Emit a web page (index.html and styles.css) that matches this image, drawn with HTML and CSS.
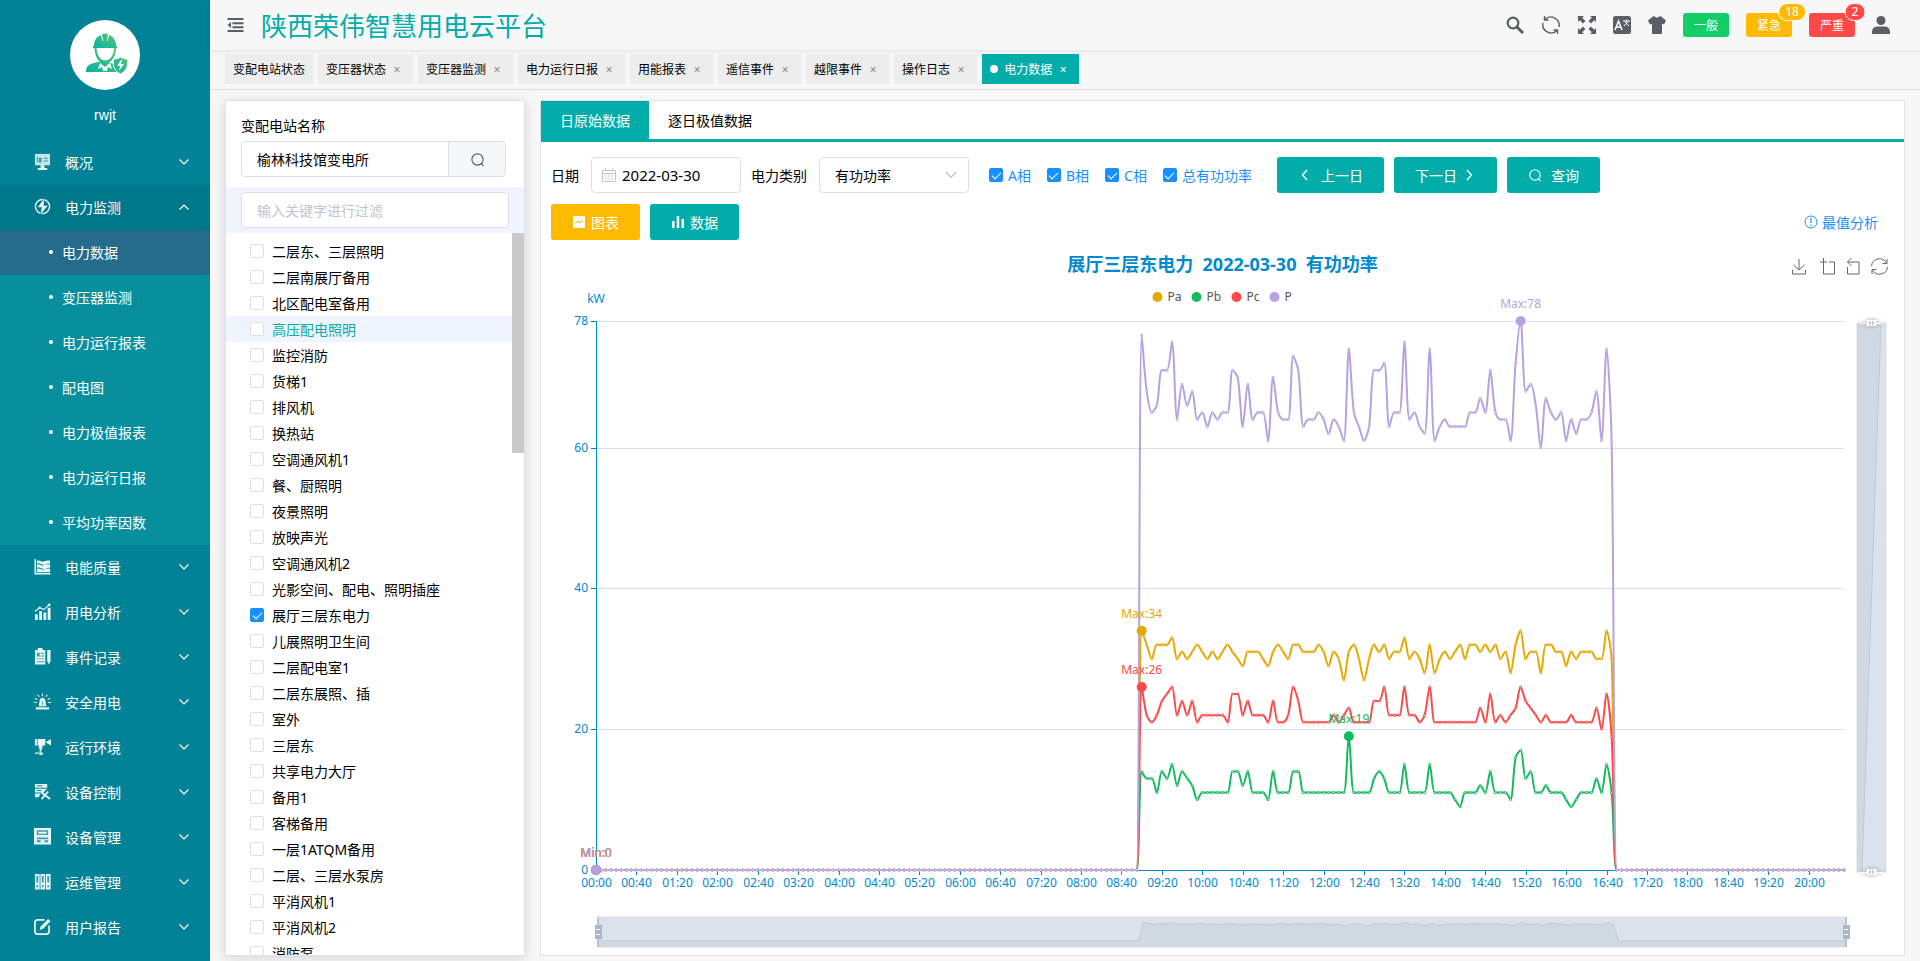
FILE: index.html
```html
<!DOCTYPE html>
<html lang="zh-CN">
<head>
    <meta charset="UTF-8">
    <meta name="viewport" content="width=device-width, initial-scale=1.0">
    <title>陕西荣伟智慧用电云平台</title>
    <link rel="stylesheet" href="styles.css">
</head>
<body>
    <svg class="sprite" aria-hidden="true">
        <symbol id="down" viewBox="0 0 12 12"><path d="M1.5 3.500 6 8l4.500-4.500" fill="none" stroke="currentColor" stroke-width="1.200"/></symbol>
        <symbol id="lens" viewBox="0 0 16 16"><circle cx="8" cy="8" r="6" fill="none" stroke="currentColor" stroke-width="1.200"/><path d="m11.500 12 3 3" stroke="currentColor" stroke-width="1.200"/></symbol>
    </svg>

    <aside class="sidebar">
        <div class="user">
            <div class="avatar">
                <svg viewBox="0 0 70 70">
                    <defs><linearGradient id="ag" x1="0" y1="1" x2="1" y2="0"><stop offset="0" stop-color="#08b3a8"/><stop offset="1" stop-color="#58c46c"/></linearGradient></defs>
                    <g fill="url(#ag)">
                        <path d="M24 26c0-6 3-9.500 7-11l1.500 6h.8L32 14.500c1.500-1.500 4.500-1.500 6 0L36.800 21h.8l1.500-6c4 1.500 7 5 7 11h1v2H23v-2z"/>
                        <path d="M24.500 28H46c0 8-4 13-7 14.500l9 3c-2 1-2 4 0 6.500H16c0-6 3-8 8-9l6-1.500c-3-2-5-6-5.500-13.500z"/>
                        <path d="M50.500 37c2 1.500 4 2 7 2 1 7-1 12-7 15-6-3-8-8-7-15 3 0 5-.5 7-2z" stroke="#fff"/>
                    </g>
                    <path d="M26.500 28h17.500c0 7-4 12.500-8.800 12.500S27 35 26.500 28zM30 43l5 4 5-4 2 6-4-2-1 4h-4l-1-4-4 2zM51 40l-4 6h3l-1 5 5-7h-3l1-4z" fill="#fff"/>
                </svg>
            </div>
            <div class="user-name">rwjt</div>
        </div>
        <nav class="menu">
            <button class="menu-item">
                <svg class="menu-icon" viewBox="0 0 18 18"><path d="M1 1h16v12H1z" opacity=".85"/><path d="M7 13h4v3h3v2H4v-2h3z"/><path d="M3 4h1v6H3zM5 5h3v5H5zM10 5h5v1h-5zM10 8h5v1h-5z" class="cut"/></svg>
                <span>概况</span><svg class="arrow"><use href="#down"/></svg>
            </button>
            <button class="menu-item open">
                <svg class="menu-icon" viewBox="0 0 18 18"><circle cx="9" cy="9" r="7.500" fill="none" stroke="#e8f7f8" stroke-width="1.500"/><path d="M11 0 3.500 10H8l-1.500 8L15 8h-4.500z" stroke="#00788c" stroke-width=".6"/></svg>
                <span>电力监测</span><svg class="arrow"><use href="#down"/></svg>
            </button>
            <ul class="submenu">
                <li><a href="#" class="current">电力数据</a></li>
                <li><a href="#">变压器监测</a></li>
                <li><a href="#">电力运行报表</a></li>
                <li><a href="#">配电图</a></li>
                <li><a href="#">电力极值报表</a></li>
                <li><a href="#">电力运行日报</a></li>
                <li><a href="#">平均功率因数</a></li>
            </ul>
            <button class="menu-item">
                <svg class="menu-icon" viewBox="0 0 18 18"><path d="M.5 1H2v15h15.500v1.500H.5zM3 3c3-1 4 1 6 1s4-2 8-1v3c-4-1-5 2-8 1S6 5 3 6zM3 7c3-1 4 1 6 1s4-2 8-1v3.500c-4-1-5 2-8 1s-3-2-6-1zM3 11.500c3-1 4 1 6 1s4-2 8-1V15H3z"/></svg>
                <span>电能质量</span><svg class="arrow"><use href="#down"/></svg>
            </button>
            <button class="menu-item">
                <svg class="menu-icon" viewBox="0 0 18 18"><path d="M1 12h3v6H1zM5.500 8.500h3V18h-3zM10 10h3v8h-3zM14.500 5h3v13h-3z"/><path d="M1 9l5-4 4.500 2L16 2" fill="none" stroke="#e8f7f8" stroke-width="1.200"/><circle cx="16" cy="2" r="1.500"/><circle cx="6" cy="5" r="1.200"/></svg>
                <span>用电分析</span><svg class="arrow"><use href="#down"/></svg>
            </button>
            <button class="menu-item">
                <svg class="menu-icon" viewBox="0 0 18 18"><path d="M1 2h3V0h5v2h3v15.500H1zM14 2h3.500v12l-1.800 3.500L14 14z"/><path d="M3 5h3v4H3zM7 5h4v1H7zM7 8h4v1H7zM3 11h8v1H3zM3 14h8v1H3z" class="cut"/></svg>
                <span>事件记录</span><svg class="arrow"><use href="#down"/></svg>
            </button>
            <button class="menu-item">
                <svg class="menu-icon" viewBox="0 0 18 18"><path d="M5 14l1-6c.3-2 1.500-3 3-3s2.700 1 3 3l1 6zM2 15h14v2.500H2z"/><path d="M9 .5v3M4 2l1.500 2M14 2l-1.500 2M0 10h3M15 10h3M1 5.500l2.500 1.500M17 5.500 14.500 7" stroke="#e8f7f8" stroke-width="1.200"/><path d="M8.500 9h1v4h-1z" class="cut"/></svg>
                <span>安全用电</span><svg class="arrow"><use href="#down"/></svg>
            </button>
            <button class="menu-item">
                <svg class="menu-icon" viewBox="0 0 18 18"><path d="M1 1h11v7H1zM13 4l5-3v7l-5-3zM5 8h4v3H8v3H6v-3H5z"/><path d="M1 16h4M6.500 14v4h2v-3" fill="none" stroke="#e8f7f8" stroke-width="1.500"/><path d="M3 1h1v7H3z" class="cut"/></svg>
                <span>运行环境</span><svg class="arrow"><use href="#down"/></svg>
            </button>
            <button class="menu-item">
                <svg class="menu-icon" viewBox="0 0 18 18"><path d="M1 1h13v4H1zM1 6h13l-4 4H1zM1 11h6l-2 4H1z"/><path d="m8 17 7-8m-7 1 9 7M8 9l2 3" fill="none" stroke="#e8f7f8" stroke-width="2"/><path d="M3 3h6M3 8h5" stroke="#018297"/></svg>
                <span>设备控制</span><svg class="arrow"><use href="#down"/></svg>
            </button>
            <button class="menu-item">
                <svg class="menu-icon" viewBox="0 0 18 18"><path d="M0 0h18v17.500H0z"/><path d="M3 2.500h12v5H3zM3 10h12v5H3z" class="cut"/><path d="M4.500 4h9v2h-9zM3 12h12v1H3zM7 12h4v3H7z"/></svg>
                <span>设备管理</span><svg class="arrow"><use href="#down"/></svg>
            </button>
            <button class="menu-item">
                <svg class="menu-icon" viewBox="0 0 18 18"><path d="M1 1h5v16.500H1zM6.800 1h5v16.500h-5zM12.600 1h5v16.500h-5z"/><path d="M2.500 3h2v7h-2zM8.300 3h2v7h-2zM14.100 3h2v7h-2zM2.500 13h2v2h-2zM8.300 13h2v2h-2zM14.100 13h2v2h-2z" class="cut"/></svg>
                <span>运维管理</span><svg class="arrow"><use href="#down"/></svg>
            </button>
            <button class="menu-item">
                <svg class="menu-icon" viewBox="0 0 18 18"><path d="M11 2H4a3 3 0 0 0-3 3v9a3 3 0 0 0 3 3h9a3 3 0 0 0 3-3V8" fill="none" stroke="#e8f7f8" stroke-width="1.800"/><path d="m6 13 1-4 8-8 2.500 2.500-8 8z"/></svg>
                <span>用户报告</span><svg class="arrow"><use href="#down"/></svg>
            </button>
        </nav>
    </aside>

    <div class="main">
        <header class="header">
            <button class="icon-btn fold" aria-label="折叠菜单">
                <svg viewBox="0 0 16 16"><path d="M0 1h16v2H0zM5 5.300h11v2H5zM5 9.300h11v2H5zM0 13h16v2H0zM3.500 5v6L0 8z"/></svg>
            </button>
            <h1>陕西荣伟智慧用电云平台</h1>
            <div class="tools">
                <button class="icon-btn" aria-label="搜索"><svg viewBox="0 0 18 18"><circle cx="7" cy="7" r="5.300" fill="none" stroke="currentColor" stroke-width="2.200"/><path d="m11 11 6 6" stroke="currentColor" stroke-width="3"/></svg></button>
                <button class="icon-btn wide" aria-label="刷新"><svg viewBox="0 0 20 20"><path d="M4 4.500A8.300 8.300 0 0 1 18 12M16 15.500A8.300 8.300 0 0 1 2 8M3.500 1v4h4M16.500 19v-4h-4" fill="none" stroke="currentColor" stroke-width="1.400"/></svg></button>
                <button class="icon-btn" aria-label="全屏"><svg viewBox="0 0 18 18"><path d="M0 0h6L4.200 1.800 7.500 5 5 7.500 1.800 4.200 0 6zM18 0v6l-1.800-1.800L13 7.500 10.500 5l3.300-3.200L12 0zM0 18v-6l1.800 1.800L5 10.500 7.500 13l-3.300 3.200L6 18zM18 18h-6l1.800-1.800L10.500 13l2.500-2.500 3.200 3.300L18 12z"/></svg></button>
                <button class="icon-btn" aria-label="语言"><svg viewBox="0 0 18 18"><rect width="18" height="18" rx="2.500"/><path d="M2 14 5.500 5 9 14M3.500 11h4" fill="none" stroke="#fff" stroke-width="1.500"/><path d="M10 5h7M13.500 3.500V5M11 10l4.500-5M16 10l-4.500-5" fill="none" stroke="#fff"/></svg></button>
                <button class="icon-btn" aria-label="主题"><svg viewBox="0 0 18 18"><path d="M5.500 0 9 1.800 12.500 0 18 4.500 16 8.500l-2-.8V17q0 1-1 1H5q-1 0-1-1V7.700l-2 .8L0 4.500z"/></svg></button>
                <button class="level normal">一般</button>
                <button class="level urgent">紧急<span class="badge">18</span></button>
                <button class="level serious">严重<span class="badge">2</span></button>
                <button class="icon-btn" aria-label="用户"><svg viewBox="0 0 18 18"><circle cx="9" cy="4.500" r="4.500"/><path d="M0 18v-2q0-5.500 6-5.500h6q6 0 6 5.500v2z"/></svg></button>
            </div>
        </header>

        <nav class="tags">
            <a href="#">变配电站状态</a>
            <a href="#">变压器状态<i>×</i></a>
            <a href="#">变压器监测<i>×</i></a>
            <a href="#">电力运行日报<i>×</i></a>
            <a href="#">用能报表<i>×</i></a>
            <a href="#">遥信事件<i>×</i></a>
            <a href="#">越限事件<i>×</i></a>
            <a href="#">操作日志<i>×</i></a>
            <a href="#" class="active">电力数据<i>×</i></a>
        </nav>

        <div class="content">
            <section class="stations">
                <div class="station">
                    <label for="station">变配电站名称</label>
                    <div class="group">
                        <input id="station" type="text" value="榆林科技馆变电所">
                        <button aria-label="选择变配电站"><svg><use href="#lens"/></svg></button>
                    </div>
                </div>
                <div class="filter">
                    <input type="text" placeholder="输入关键字进行过滤" aria-label="过滤">
                </div>
                <div class="tree">
                    <label><input type="checkbox">二层东、三层照明</label>
                    <label><input type="checkbox">二层南展厅备用</label>
                    <label><input type="checkbox">北区配电室备用</label>
                    <label class="hover"><input type="checkbox">高压配电照明</label>
                    <label><input type="checkbox">监控消防</label>
                    <label><input type="checkbox">货梯1</label>
                    <label><input type="checkbox">排风机</label>
                    <label><input type="checkbox">换热站</label>
                    <label><input type="checkbox">空调通风机1</label>
                    <label><input type="checkbox">餐、厨照明</label>
                    <label><input type="checkbox">夜景照明</label>
                    <label><input type="checkbox">放映声光</label>
                    <label><input type="checkbox">空调通风机2</label>
                    <label><input type="checkbox">光影空间、配电、照明插座</label>
                    <label><input type="checkbox" checked>展厅三层东电力</label>
                    <label><input type="checkbox">儿展照明卫生间</label>
                    <label><input type="checkbox">二层配电室1</label>
                    <label><input type="checkbox">二层东展照、插</label>
                    <label><input type="checkbox">室外</label>
                    <label><input type="checkbox">三层东</label>
                    <label><input type="checkbox">共享电力大厅</label>
                    <label><input type="checkbox">备用1</label>
                    <label><input type="checkbox">客梯备用</label>
                    <label><input type="checkbox">一层1ATQM备用</label>
                    <label><input type="checkbox">二层、三层水泵房</label>
                    <label><input type="checkbox">平消风机1</label>
                    <label><input type="checkbox">平消风机2</label>
                    <label><input type="checkbox">消防泵</label>
                    <div class="thumb"></div>
                </div>
            </section>

            <section class="panel">
                <div class="tabs">
                    <button class="active">日原始数据</button>
                    <button>逐日极值数据</button>
                </div>
                <div class="panel-body">
                    <form class="query" onsubmit="return false">
                        <label class="name" for="date">日期</label>
                        <div class="field date">
                            <svg viewBox="0 0 14 14"><path d="M.5 2.500h13v11H.5zM.5 5.500h13M3.500 0v3M10.500 0v3M3 8h2M6 8h2M9 8h2M3 11h2M6 11h2M9 11h2" fill="none" stroke="currentColor"/></svg>
                            <input id="date" type="text" value="2022-03-30">
                        </div>
                        <label class="name" for="kind">电力类别</label>
                        <div class="field kind">
                            <select id="kind"><option>有功功率</option></select>
                            <svg><use href="#down"/></svg>
                        </div>
                        <div class="checks">
                            <label><input type="checkbox" checked>A相</label>
                            <label><input type="checkbox" checked>B相</label>
                            <label><input type="checkbox" checked>C相</label>
                            <label><input type="checkbox" checked>总有功功率</label>
                        </div>
                        <button class="btn"><svg viewBox="0 0 14 14"><path d="M9 2 4.500 7 9 12" fill="none" stroke="currentColor" stroke-width="1.300"/></svg><span>上一日</span></button>
                        <button class="btn">下一日<svg viewBox="0 0 14 14"><path d="m5 2 4.500 5L5 12" fill="none" stroke="currentColor" stroke-width="1.300"/></svg></button>
                        <button class="btn"><svg><use href="#lens"/></svg><span>查询</span></button>
                    </form>
                    <div class="views">
                        <button class="btn yellow"><svg viewBox="0 0 14 14"><rect x="1" y="1" width="12" height="12" fill="#fff"/><path d="m3 9 3-3 2 2 3-3" fill="none" stroke="#ffb900"/></svg>图表</button>
                        <button class="btn"><svg viewBox="0 0 14 14"><path d="M1 6h2.500v7H1zM5.700 1h2.500v12H5.700zM10.500 4H13v9h-2.500z" fill="#fff"/></svg>数据</button>
                        <a href="#" class="extremum"><svg viewBox="0 0 14 14"><circle cx="7" cy="7" r="6" fill="none" stroke="currentColor"/><path d="M7 3v5M7 9.500v1.500" stroke="currentColor" stroke-width="1.200"/></svg>最值分析</a>
                    </div>
                    <div class="chart" id="chart"></div>
                </div>
            </section>
        </div>
    </div>

    <script src="chart.js"></script>
</body>
</html>
```

FILE: styles.css
```css
* {
    box-sizing: border-box;
}

body {
    margin: 0;
    height: 100vh;
    display: flex;
    overflow: hidden;
    background-color: #f7f7f7;
    color: #000;
    font-family: "Noto Sans", "Noto Sans CJK SC", sans-serif;
    font-size: 14px;
}

button, input, select {
    font: inherit;
    color: inherit;
    margin: 0;
}

button {
    border: none;
    background: none;
    padding: 0;
    cursor: pointer;
}

a {
    color: inherit;
    text-decoration: none;
}

svg {
    display: block;
    flex: none;
}

.sprite {
    position: absolute;
    width: 0;
    height: 0;
}

/* sidebar */
.sidebar {
    width: 210px;
    flex: none;
    background-color: #018297;
    color: #fff;
    overflow: hidden;
}

.user {
    height: 140px;
    padding-top: 20px;
}

.avatar {
    width: 70px;
    height: 70px;
    margin: 0 auto;
    border-radius: 50%;
    background-color: #fff;
}

.user-name {
    margin-top: 15px;
    line-height: 20px;
    text-align: center;
    font-family: "Liberation Sans", sans-serif;
}

.menu-item {
    display: flex;
    align-items: center;
    width: 100%;
    height: 45px;
    padding: 0 20px 2px 34px;
}

.menu-item span {
    flex: 1;
    padding-left: 14px;
    text-align: left;
}

.menu-item.open {
    background-color: #00788c;
}

.menu-item.open .arrow {
    transform: rotate(180deg);
}

.menu-icon {
    width: 17px;
    height: 17px;
    fill: #e8f7f8;
}

.menu-icon .cut {
    fill: #3b9dad;
}

.arrow {
    width: 12px;
    height: 12px;
}

.submenu {
    list-style: none;
    margin: 0;
    padding: 0;
    background-color: #088f9e;
}

.submenu a {
    display: flex;
    align-items: center;
    gap: 9px;
    height: 45px;
    padding: 0 0 2px 49px;
}

.submenu a::before {
    content: "";
    width: 4px;
    height: 4px;
    border-radius: 50%;
    background-color: #fff;
}

.submenu a.current {
    background-color: #246b8c;
}

/* header */
.main {
    flex: 1;
    min-width: 0;
    display: flex;
    flex-direction: column;
}

.header {
    display: flex;
    align-items: center;
    height: 50px;
    padding: 0 30px 0 17px;
    box-shadow: 0 1px 4px rgba(0, 21, 41, 0.1);
}

.header h1 {
    flex: 1;
    margin: 0 0 0 17px;
    font-size: 26px;
    font-weight: 400;
    color: #02aca9;
}

.icon-btn svg {
    width: 18px;
    height: 18px;
    fill: #5a5e66;
    color: #5a5e66;
}

.icon-btn.fold svg {
    width: 17px;
    height: 16px;
}

.icon-btn.wide svg {
    width: 20px;
    height: 20px;
}

.tools {
    display: flex;
    align-items: center;
    gap: 17px;
}

.level {
    position: relative;
    width: 46px;
    height: 24px;
    border-radius: 3px;
    font-size: 12px;
    color: #fff;
}

.level.normal {
    background-color: #13ce66;
}

.level.urgent {
    background-color: #ffba00;
}

.level.serious {
    background-color: #ff4949;
}

.badge {
    position: absolute;
    top: -10px;
    left: 100%;
    height: 18px;
    padding: 0 6px;
    border: 1px solid #fff;
    border-radius: 10px;
    background-color: inherit;
    line-height: 16px;
    transform: translateX(-50%);
}

.tags {
    display: flex;
    gap: 5px;
    height: 40px;
    padding: 4px 15px 0;
    border-bottom: 1px solid #d8dce5;
    font-size: 12px;
}

.tags a {
    display: flex;
    align-items: center;
    height: 30px;
    padding: 0 8px;
    background-color: #ededed;
}

.tags i {
    width: 16px;
    margin-left: 3px;
    text-align: center;
    font-style: normal;
    color: #888;
}

.tags .active, .tags .active i {
    background-color: #02aca9;
    color: #fff;
}

.tags .active::before {
    content: "";
    width: 8px;
    height: 8px;
    margin-right: 6px;
    border-radius: 50%;
    background-color: #fff;
}

.content {
    flex: 1;
    min-height: 0;
    display: flex;
    gap: 15px;
    padding: 10px 15px 5px;
}

.stations, .panel {
    display: flex;
    flex-direction: column;
    border: 1px solid #e0e3e8;
    background-color: #fff;
}

/* station list */
.stations {
    width: 300px;
    flex: none;
    box-shadow: 0 2px 12px rgba(0, 0, 0, 0.15);
}

.station {
    padding: 14px 18px 10px 15px;
}

.station label {
    display: block;
    margin-bottom: 5px;
    line-height: 21px;
}

.group {
    display: flex;
    height: 36px;
    border: 1px solid #dcdfe6;
    border-radius: 4px;
    overflow: hidden;
}

.group input {
    flex: 1;
    min-width: 0;
    padding: 0 15px;
    border: none;
}

.group button {
    width: 57px;
    display: flex;
    align-items: center;
    justify-content: center;
    border-left: 1px solid #dcdfe6;
    background-color: #f5f7fa;
    color: #5a5e66;
}

.group svg {
    width: 15px;
    height: 15px;
}

.filter {
    padding: 5px 15px;
    background-color: #f0f4fe;
}

.filter input {
    width: 100%;
    height: 36px;
    padding: 0 15px;
    border: 1px solid #dcdfe6;
    border-radius: 4px;
    background-color: #fff;
}

.filter input::placeholder {
    color: #bfc4cd;
}

.tree {
    position: relative;
    flex: 1;
    min-height: 0;
    padding-top: 5px;
    overflow: hidden;
}

.tree label {
    display: flex;
    align-items: center;
    height: 26px;
    padding-left: 24px;
    gap: 8px;
}

.tree .hover {
    background-color: #f0f4fe;
    color: #02aca9;
}

.thumb {
    position: absolute;
    top: 0;
    right: 0;
    width: 12px;
    height: 220px;
    background-color: #c9c9c9;
}

input[type="checkbox"] {
    appearance: none;
    display: grid;
    place-items: center;
    width: 14px;
    height: 14px;
    flex: none;
    border: 1px solid #dcdfe6;
    border-radius: 2px;
    background-color: #fff;
}

input[type="checkbox"]:checked {
    border-color: #1890ff;
    background-color: #1890ff;
}

input[type="checkbox"]:checked::after {
    content: "";
    width: 8px;
    height: 4px;
    border: solid #fff;
    border-width: 0 0 1px 1px;
    transform: translateY(-1px) rotate(-45deg);
}

/* data panel */
.panel {
    flex: 1;
    min-width: 0;
}

.tabs {
    display: flex;
    border-bottom: 3px solid #02aca9;
}

.tabs button {
    height: 38px;
    padding: 0 19px;
}

.tabs .active {
    background-color: #02aca9;
    color: #fff;
}

.panel-body {
    flex: 1;
    min-height: 0;
    display: flex;
    flex-direction: column;
    gap: 11px;
    padding: 15px 10px 4px;
}

.query, .views, .checks {
    display: flex;
    align-items: center;
    gap: 10px;
}

.query .name {
    padding-right: 2px;
}

.field {
    display: flex;
    align-items: center;
    width: 150px;
    height: 36px;
    border: 1px solid #dcdfe6;
    border-radius: 4px;
    color: #c0c4cc;
}

.field input, .field select {
    flex: 1;
    min-width: 0;
    height: 34px;
    border: none;
    background: none;
    color: #000;
}

.date {
    padding-left: 10px;
    font-size: 15px;
}

.date svg {
    width: 14px;
    height: 14px;
}

.date input {
    padding: 0 6px;
}

.kind select {
    appearance: none;
    padding: 0 15px;
}

.kind svg {
    width: 14px;
    height: 14px;
    margin-right: 10px;
}

.checks {
    gap: 16px;
    padding: 0 15px 0 10px;
    color: #1890ff;
}

.checks label {
    display: flex;
    align-items: center;
    gap: 5px;
}

.btn {
    display: flex;
    align-items: center;
    gap: 5px;
    height: 36px;
    padding: 0 21px;
    border-radius: 3px;
    background-color: #02aca9;
    color: #fff;
}

.btn svg, .extremum svg {
    width: 14px;
    height: 14px;
}

.btn span {
    padding-left: 4px;
}

.btn.yellow {
    background-color: #ffb900;
}

.extremum {
    display: flex;
    align-items: center;
    gap: 4px;
    margin-left: auto;
    padding-right: 16px;
    color: #1890ff;
}

.chart {
    flex: 1;
    min-height: 0;
    overflow: hidden;
}

.chart svg {
    width: 100%;
    height: 100%;
}

.chart text {
    font-size: 12px;
    text-anchor: middle;
    fill: #008acd;
}

.chart .title {
    font-size: 18px;
    font-weight: bold;
    white-space: pre;
}

.chart .legend {
    text-anchor: start;
    fill: #555;
}

.chart .y-label {
    text-anchor: end;
}
```

FILE: chart.js
```js
const STEP = 5;        // minutes between samples
const COUNT = 248;     // 00:00 - 20:35
const FIRST = 108;     // first sample with load
const MAX = 78;
const SMOOTH = 0.3;

const series = [
    { name: 'Pa', color: '#e5a800', data: [
        34, 32, 30, 32, 32, 32, 33, 30, 31, 30, 31, 32, 31, 30, 31, 30, 31, 32, 31, 30, 29, 31, 31, 31, 30, 29, 31, 32, 31, 30,
        32, 32, 31, 31, 31, 32, 31, 29, 31, 30, 27, 31, 32, 30, 27, 30, 32, 31, 32, 30, 31, 31, 33, 30, 31, 30, 28, 32, 28, 30,
        31, 30, 31, 32, 30, 32, 32, 31, 32, 31, 32, 30, 31, 28, 32, 34, 30, 31, 31, 28, 32, 32, 31, 31, 29, 31, 30, 31, 31, 31,
        30, 30, 34, 30] },
    { name: 'Pb', color: '#13bb5d', data: [
        14, 13, 13, 11, 14, 13, 15, 12, 14, 13, 12, 10, 11, 11, 11, 11, 11, 11, 14, 14, 12, 14, 11, 11, 11, 10, 14, 11, 11, 11,
        14, 14, 11, 11, 11, 11, 11, 11, 11, 11, 11, 19, 11, 11, 11, 11, 13, 14, 13, 11, 11, 11, 15, 11, 11, 11, 11, 15, 11, 11,
        11, 11, 10, 9, 11, 11, 11, 12, 11, 14, 11, 11, 11, 10, 16, 17, 13, 14, 11, 11, 12, 11, 11, 11, 10, 9, 10, 11, 11, 11,
        13, 11, 15, 11] },
    { name: 'Pc', color: '#ff4949', data: [
        26, 22, 21, 22, 24, 25, 26, 22, 24, 22, 24, 21, 22, 22, 22, 22, 22, 21, 25, 25, 22, 24, 22, 22, 22, 21, 24, 21, 21, 22,
        26, 24, 21, 21, 21, 21, 21, 21, 22, 21, 22, 23, 21, 21, 21, 21, 24, 24, 26, 22, 22, 22, 26, 22, 22, 21, 22, 26, 21, 21,
        21, 21, 21, 21, 21, 21, 21, 23, 21, 25, 21, 22, 21, 22, 23, 26, 24, 23, 22, 21, 22, 21, 21, 21, 21, 22, 21, 21, 21, 21,
        23, 20, 25, 19] },
    { name: 'P', color: '#b6a2de', data: [
        76, 68, 65, 66, 71, 71, 75, 64, 69, 66, 68, 64, 65, 63, 65, 64, 65, 65, 71, 70, 63, 69, 64, 65, 65, 61, 70, 65, 64, 64,
        73, 71, 63, 64, 64, 65, 64, 62, 64, 63, 61, 74, 65, 63, 61, 63, 71, 71, 72, 63, 65, 65, 75, 64, 65, 63, 62, 74, 61, 63,
        64, 63, 63, 63, 63, 65, 65, 67, 65, 71, 65, 64, 64, 61, 72, 78, 68, 69, 66, 60, 67, 65, 64, 65, 61, 64, 62, 64, 64, 65,
        68, 61, 74, 61] }
];

function clamp(v, a, b) {
    return Math.max(Math.min(a, b), Math.min(Math.max(a, b), v));
}

// Bezier through all points, control points kept between neighbours
function smoothPath(p) {
    let d = `M${p[0][0]} ${p[0][1]}`;
    let c0 = p[0];
    for (let i = 1; i < p.length; i++) {
        const prev = p[i - 1], cur = p[i], next = p[i + 1];
        let c1 = cur, nextC0 = cur;
        if (next) {
            const lenPrev = Math.hypot(cur[0] - prev[0], cur[1] - prev[1]);
            const lenNext = Math.hypot(next[0] - cur[0], next[1] - cur[1]);
            const ratio = lenNext / (lenNext + lenPrev);
            c1 = [];
            nextC0 = [];
            for (let k = 0; k < 2; k++) {
                const n = clamp(cur[k] + (next[k] - prev[k]) * SMOOTH * ratio, next[k], cur[k]);
                c1[k] = clamp(cur[k] - (n - cur[k]) * lenPrev / lenNext, prev[k], cur[k]);
                nextC0[k] = cur[k] + (cur[k] - c1[k]) * lenNext / lenPrev;
            }
        }
        d += `C${[...c0, ...c1, ...cur].map(v => v.toFixed(1)).join(' ')}`;
        c0 = nextC0;
    }
    return d;
}

function draw() {
    const box = document.getElementById('chart');
    const w = box.clientWidth, h = box.clientHeight;
    const left = 45, right = w - 50, top = 70, bottom = h - 81;
    const x = i => left + (right - left) * i / (COUNT - 1);
    const y = v => bottom - (bottom - top) * v / MAX;
    const mid = w / 2;
    let out = `<text class="title" x="${mid}" y="20">展厅三层东电力  2022-03-30  有功功率</text>`;

    [[-65, 'Pa'], [-26, 'Pb'], [14, 'Pc'], [52, 'P']].forEach(([dx, name], i) => {
        out += `<circle cx="${mid + dx}" cy="46" r="5" fill="${series[i].color}"/><text class="legend" x="${mid + dx + 10}" y="50">${name}</text>`;
    });

    out += `<g transform="translate(${w - 103} 7)" fill="none" stroke="#666">
        <path d="M8 1v11M2.500 7 8 12l5.500-5M1.500 12v4h13v-4"/>
        <path d="M29 4h7M32.500 0v16h11V4H38"/>
        <path d="M61 4h7v12H56.500V9M60.500 0 56.500 4l4 4M56.500 4H62"/>
        <path d="M80.500 8a8 8 0 0 1 15-3M96.500 9a8 8 0 0 1-15 3M96 1v4.500h-4.500M81 16v-4.500h4.500"/></g>`;

    out += `<text x="${left}" y="52">kW</text>`;
    [0, 20, 40, 60, 78].forEach(v => {
        const yy = Math.round(y(v)) + 0.5;
        if (v) out += `<path d="M${left} ${yy}H${right}" stroke="#d3e3ef"/>`;
        out += `<path d="M${left - 5} ${yy}H${left}" stroke="#008acd"/><text class="y-label" x="${left - 8}" y="${yy + 3}">${v}</text>`;
    });
    out += `<path d="M${left + 0.5} ${top}V${bottom}" stroke="#008acd"/><path d="M${left} ${bottom + 0.5}H${right}" stroke="#008acd"/>`;
    for (let i = 0; i < COUNT; i += 8) {
        const m = i * STEP;
        const label = String(Math.floor(m / 60)).padStart(2, '0') + ':' + String(m % 60).padStart(2, '0');
        const xx = Math.round(x(i)) + 0.5;
        out += `<path d="M${xx} ${bottom}v5" stroke="#008acd"/><text x="${xx}" y="${bottom + 17}">${label}</text>`;
    }

    // lines with small hollow symbols
    series.forEach(s => {
        const values = Array(COUNT).fill(0);
        s.data.forEach((v, i) => values[FIRST + i] = v);
        const pts = values.map((v, i) => [x(i), y(v)]);
        out += `<path d="${smoothPath(pts)}" fill="none" stroke="${s.color}" stroke-width="2"/>`;
        out += `<g fill="#fff" stroke="${s.color}" stroke-width="1">` + pts.map(p => `<circle cx="${p[0].toFixed(1)}" cy="${p[1].toFixed(1)}" r="1"/>`).join('') + '</g>';
    });

    // min / max marks
    series.forEach(s => {
        const max = Math.max(...s.data);
        const mi = FIRST + s.data.indexOf(max);
        [[0, 0, 'Min'], [mi, max, 'Max']].forEach(([i, v, t]) => {
            out += `<circle cx="${x(i)}" cy="${y(v)}" r="5" fill="${s.color}"/><text x="${x(i)}" y="${y(v) - 13}" style="fill:${s.color}">${t}:${v}</text>`;
        });
    });

    // horizontal zoom bar
    const zt = bottom + 47, zh = 30, zl = left + 2, zr = right + 2;
    const zx = i => zl + (zr - zl) * i / (COUNT - 1);
    let shape = `M${zl} ${zt + 24}H${zx(FIRST - 1)}`;
    series[0].data.forEach((v, i) => shape += `L${zx(FIRST + i).toFixed(1)} ${(zt + 24 - v * 0.55).toFixed(1)}`);
    shape += `L${zx(FIRST + series[0].data.length)} ${zt + 24}H${zr}`;
    out += `<path d="M${zl} ${zt}H${zr}v${zh}H${zl}z" fill="#dbe2ec" stroke="#ddd"/>
        <path d="${shape}V${zt + zh}H${zl}z" fill="#d0d8e1"/><path d="${shape}" fill="none" stroke="#c0c9d6"/>`;
    [zl, zr].forEach(v => {
        out += `<path d="M${v} ${zt}v${zh}" stroke="#a7b7cc" stroke-width="1.500"/><rect x="${v - 3}" y="${zt + 8}" width="7" height="14" fill="#a7b7cc"/>
            <path d="M${v - 2} ${zt + 12.5}h4M${v - 2} ${zt + 17.5}h4" stroke="#fff"/>`;
    });

    // vertical zoom bar
    const vl = right + 13, vr = right + 42, vt = top + 2, vb = bottom + 2;
    out += `<path d="M${vl} ${vt}H${vr}V${vb}H${vl}z" fill="#dbe2ec" stroke="#ddd"/>
        <path d="M${vl} ${vt}h24L${vl + 5} ${vb}h-5z" fill="#d0d8e1"/><path d="M${vl + 24} ${vt}L${vl + 5} ${vb}" stroke="#c0c9d6"/>`;
    [vt, vb].forEach(v => {
        const c = (vl + vr) / 2;
        out += `<g style="filter:drop-shadow(0 0 2px #999)"><path d="M${c - 12} ${v + 0.5}h24" stroke="#fff"/><rect x="${c - 5}" y="${v - 3}" width="10" height="6" fill="#fff"/></g>
            <path d="M${c - 1.5} ${v - 2}v4M${c + 1.5} ${v - 2}v4" stroke="#999"/>`;
    });

    box.innerHTML = `<svg viewBox="0 0 ${w} ${h}">${out}</svg>`;
}

draw();
window.addEventListener('resize', draw);
```
